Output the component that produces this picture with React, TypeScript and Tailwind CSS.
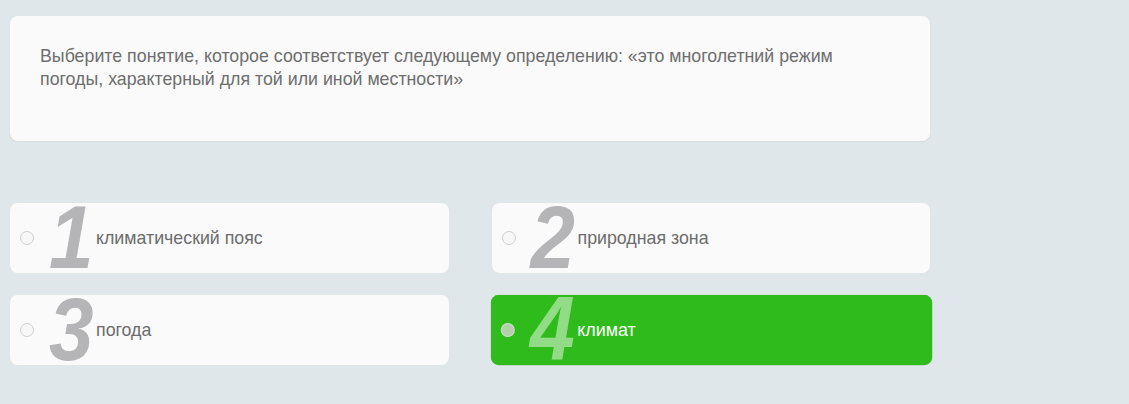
const options = [
  { n: "1", label: "климатический пояс", active: false },
  { n: "2", label: "природная зона", active: false },
  { n: "3", label: "погода", active: false },
  { n: "4", label: "климат", active: true },
];

function Option({ n, label, active }: { n: string; label: string; active: boolean }) {
  return (
    <div
      className={`flex h-[70px] items-center rounded-lg pl-[10px] ${
        active ? "bg-[#30bb1d] scale-[1.006]" : "bg-[#fafafa]"
      }`}
    >
      <span
        className={`h-[14px] w-[14px] rounded-full border ${
          active ? "border-[#c9e6c4] bg-[#b3cfad]" : "border-[#cfcfcf] bg-[#f7f7f7]"
        }`}
      />
      <span
        className={`ml-[15px] w-[47px] origin-center scale-y-[1.12] text-[80px] font-bold italic leading-none tracking-[-2px] ${
          active ? "text-[#92dc87]" : "text-[#b5b5b7]"
        }`}
        style={{ fontFamily: '"Liberation Sans", Arial, sans-serif' }}
      >
        {n}
      </span>
      <span className={`text-[17.8px] ${active ? "text-white" : "text-[#6c6c6c]"}`}>{label}</span>
    </div>
  );
}

export default function App() {
  return (
    <div
      className="min-h-[404px] w-full bg-[#e0e7ea] pl-[10px] pt-[16px]"
      style={{ fontFamily: '"Liberation Sans", Arial, sans-serif' }}
    >
      <div className="w-[920px]">
        <div className="h-[125px] rounded-lg bg-[#fafafa] px-[30px] pt-[29px] shadow-[0_1px_2px_rgba(0,0,0,0.06)]">
          <p className="text-[17.8px] leading-[23px] text-[#6e6e6e]">
            Выберите понятие, которое соответствует следующему определению: «это многолетний режим
            <br />
            погоды, характерный для той или иной местности»
          </p>
        </div>
        <div className="mt-[62px] grid grid-cols-2 gap-x-[43px] gap-y-[22px]">
          {options.map((o) => (
            <Option key={o.n} {...o} />
          ))}
        </div>
      </div>
    </div>
  );
}
